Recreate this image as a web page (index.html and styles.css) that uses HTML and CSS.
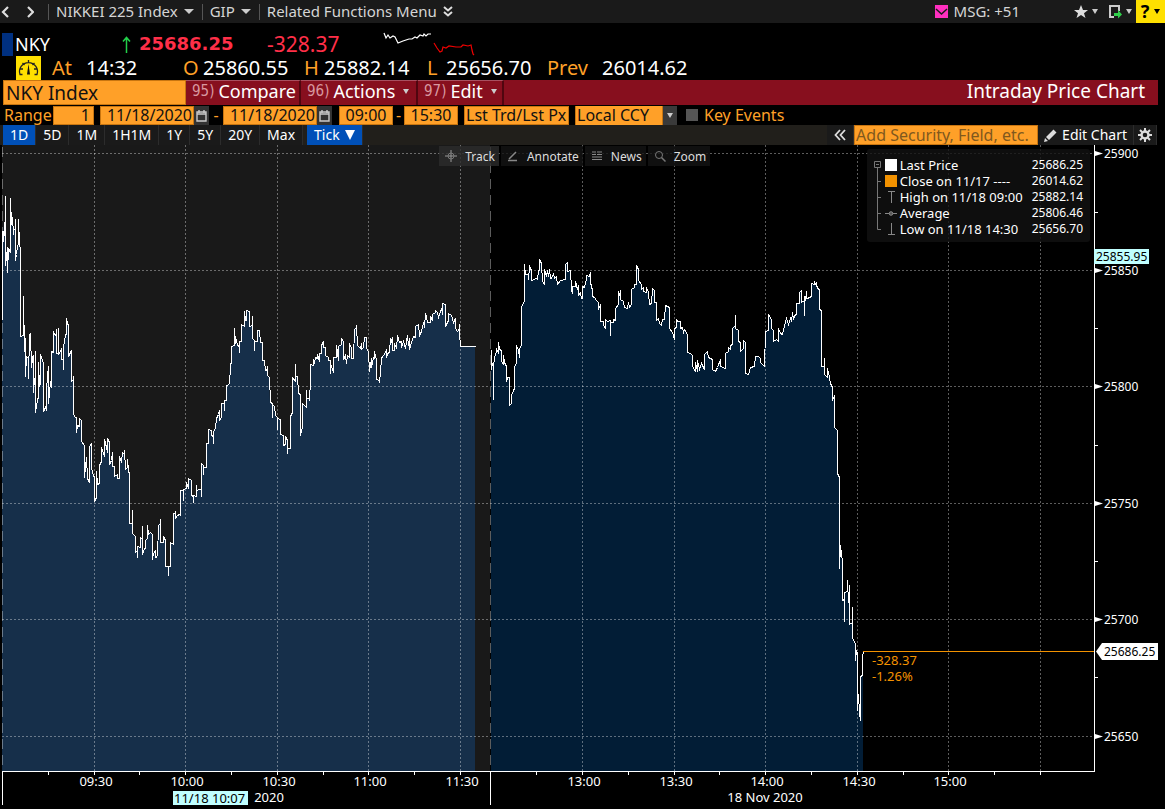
FILE: index.html
```html
<!DOCTYPE html>
<html lang="en">
<head>
    <meta charset="utf-8">
    <title>NKY Index - Intraday Price Chart</title>
    <link rel="stylesheet" href="styles.css">
</head>
<body>
    <!-- top bar -->
    <header class="topbar">
        <button class="nav" aria-label="Back"><svg width="10" height="14" viewBox="0 0 10 14"><path d="M8 2 3 7l5 5" fill="none" stroke="#ddd" stroke-width="2.2"/></svg></button>
        <button class="nav" aria-label="Forward"><svg width="10" height="14" viewBox="0 0 10 14"><path d="m4 2 5 5-5 5" fill="none" stroke="#ddd" stroke-width="2.2"/></svg></button>
        <button class="menu">NIKKEI 225 Index <i class="caret"></i></button>
        <button class="menu">GIP <i class="caret"></i></button>
        <button class="menu">Related Functions Menu
            <svg width="10" height="12" viewBox="0 0 10 12"><path d="m1 1 4 3.5L9 1M1 6l4 3.5L9 6" fill="none" stroke="#ddd" stroke-width="2"/></svg>
        </button>
        <div class="topbar-right">
            <button class="msg">
                <svg width="13" height="13" viewBox="0 0 13 13"><path fill="#ff2fc0" d="M0 0h13v13H0z"/><path d="m1 4 5.5 5L12 4" fill="none" stroke="#1a1a1a" stroke-width="1.5"/></svg>
                MSG: +51
            </button>
            <button class="tool" aria-label="Favorites">
                <svg width="14" height="14" viewBox="0 0 14 14"><path fill="#ddd" d="m7 0 2 5h5l-4 3.2L11.5 13 7 10.1 2.5 13 4 8.2 0 5h5z"/></svg>
                <i class="caret small"></i>
            </button>
            <button class="tool" aria-label="Export">
                <svg width="14" height="14" viewBox="0 0 14 14"><path d="M11 6V1H2v11h4" fill="none" stroke="#ccc" stroke-width="2"/><path fill="#2fd04a" d="M6 8h4V5l4 4.5-4 4V11H6z"/></svg>
                <i class="caret small"></i>
            </button>
            <button class="help">? <i class="caret small"></i></button>
        </div>
    </header>

    <!-- quote -->
    <section class="quote">
        <div class="quote-row first">
            <span class="flag"></span>
            <span>NKY</span>
            <svg width="9" height="17" viewBox="0 0 9 17"><path d="M4.5 17V2M1 5.5l3.5-4L8 5.5" fill="none" stroke="#22d04a" stroke-width="1.5"/></svg>
            <b class="last">25686.25</b>
            <span class="down">-328.37</span>
            <svg width="94" height="24" viewBox="382 32 94 24" fill="none" stroke-width="1.2">
                <path stroke="#fff" d="m384 33 2 5 2-3 2 3 3-2 2 1 3 6 5-2 6-2 3 0 3-2 2 1 3-3 3 1 1-2 2 2 2-2 3 0"/>
                <path stroke="#e00" d="m434 43 3 5 3 4 2-1 1-4 3 1 3-2 7 1 5 0 2-2 5 1 3-1 1 5 1 4 1 1"/>
            </svg>
        </div>
        <div class="quote-row second">
            <svg width="25" height="24" viewBox="0 0 25 24"><path fill="#ffe000" d="M0 0h25v24H0z"/><path d="M6.500 18.500H4A9 9 0 1 1 21 18.500H18.500M3.500 13H7M18 13h3.500M6.500 7l2 2M18.500 7l-2 2M12.500 4v3" fill="none" stroke="#222" stroke-width="1.3"/><path d="M12.500 8l1.500 10.500h-3z" fill="#111"/></svg>
            <span class="name">At</span><span>14:32</span>
            <span class="name">O</span><span>25860.55</span>
            <span class="name">H</span><span>25882.14</span>
            <span class="name">L</span><span>25656.70</span>
            <span class="name">Prev</span><span>26014.62</span>
        </div>
    </section>

    <!-- function bar -->
    <nav class="funcbar">
        <input class="field ticker" type="text" value="NKY Index" aria-label="Security">
        <button class="func compare"><em>95)</em> Compare</button>
        <button class="func actions"><em>96)</em> Actions <i class="caret small"></i></button>
        <button class="func edit"><em>97)</em> Edit <i class="caret small"></i></button>
        <h1>Intraday Price Chart</h1>
    </nav>

    <!-- range settings -->
    <form class="range">
        <label class="range-label" for="range">Range</label>
        <input class="field count" id="range" type="text" value="1">
        <div class="date">
            <input class="field" type="text" value="11/18/2020" aria-label="Start date">
            <button type="button" aria-label="Pick start date"><svg width="11" height="13" viewBox="0 0 11 13"><path d="M1 3h9v9H1zM1 5h9M3 1v3m5-3v3" fill="none" stroke="#ccc" stroke-width="1.4"/></svg></button>
        </div>
        <span class="dash">-</span>
        <div class="date">
            <input class="field" type="text" value="11/18/2020" aria-label="End date">
            <button type="button" aria-label="Pick end date"><svg width="11" height="13" viewBox="0 0 11 13"><path d="M1 3h9v9H1zM1 5h9M3 1v3m5-3v3" fill="none" stroke="#ccc" stroke-width="1.4"/></svg></button>
        </div>
        <input class="field time from" type="text" value="09:00" aria-label="Start time">
        <span class="dash short">-</span>
        <input class="field time" type="text" value="15:30" aria-label="End time">
        <input class="field source" type="text" value="Lst Trd/Lst Px" aria-label="Price source">
        <div class="currency">
            <select class="field" aria-label="Currency"><option>Local CCY</option></select>
        </div>
        <label class="events"><input type="checkbox">Key Events</label>
    </form>

    <!-- period tabs -->
    <div class="periods">
        <button class="tab active">1D</button>
        <button class="tab">5D</button>
        <button class="tab">1M</button>
        <button class="tab">1H1M</button>
        <button class="tab">1Y</button>
        <button class="tab">5Y</button>
        <button class="tab">20Y</button>
        <button class="tab">Max</button>
        <button class="tab active tick">Tick <i class="caret big"></i></button>
        <div class="edit-tools">
            <button class="tab" aria-label="Collapse"><svg width="12" height="12" viewBox="0 0 12 12"><path d="M6 1 1.5 6 6 11M11 1 6.5 6l4.500 5" fill="none" stroke="#ddd" stroke-width="1.8"/></svg></button>
            <input class="field add" type="text" placeholder="Add Security, Field, etc." aria-label="Add security or field">
            <button class="tab edit-chart"><svg width="13" height="13" viewBox="0 0 13 13"><path fill="#ddd" d="m0 13 1-4 3 3zM2 8l7.500-7.500 3 3L5 11z"/></svg> Edit Chart</button>
            <button class="tab gear" aria-label="Settings"><svg width="14" height="14" viewBox="0 0 14 14"><circle cx="7" cy="7" r="3.5" fill="none" stroke="#ddd" stroke-width="2.4"/><path d="M7 0v3m0 8v3M0 7h3m8 0h3M2 2l2.2 2.2m5.6 5.6L12 12M12 2 9.8 4.2M4.2 9.8 2 12" stroke="#ddd" stroke-width="2"/></svg></button>
        </div>
    </div>

    <!-- chart -->
    <main class="chart">
        <svg class="plot" viewBox="0 145 1165 664" role="img" aria-label="NKY intraday price">
            <defs>
                <path id="morning" d="M2,319 L2,231 4,231 3,241 4,222 5,222 5,195 5,265 7,247 7,272 8,248 10,252 10,198 11,224 12,217 13,234 13,230 15,228 15,218 15,260 16,254 17,245 18,244 18,219 19,244 20,249 20,336 23,335 23,296 24,351 25,341 25,337 25,376 26,356 28,358 28,378 29,335 30,333 31,367 32,356 33,368 33,354 33,392 34,378 35,378 35,350 35,412 37,399 38,397 38,362 39,386 40,383 40,354 42,360 43,363 43,411 45,407 46,410 46,390 47,375 48,366 48,403 50,381 51,387 51,351 53,352 53,331 54,334 56,335 56,328 56,353 58,353 58,327 58,354 60,351 61,348 61,359 63,359 63,369 63,347 65,335 66,333 66,318 67,323 68,325 68,356 70,352 71,350 71,381 73,379 73,375 73,414 75,417 76,417 76,432 77,425 79,426 79,418 81,420 81,441 84,445 84,477 86,457 87,478 89,482 89,446 91,443 91,468 93,475 94,477 94,501 96,497 96,471 97,484 99,483 99,465 101,461 101,447 103,453 104,456 104,439 106,447 107,452 107,438 109,442 109,464 111,460 112,452 112,466 114,466 114,476 117,474 117,478 119,478 119,456 121,462 122,452 124,454 124,450 125,469 127,467 127,459 128,470 129,474 129,523 132,523 132,509 132,533 135,536 135,552 137,550 137,557 137,546 140,547 140,537 142,539 142,525 142,554 144,548 145,548 145,540 147,538 147,525 148,534 150,532 152,534 152,559 153,553 155,550 155,557 157,556 158,525 160,523 160,518 160,542 163,542 163,536 165,540 165,566 168,566 168,575 168,566 170,566 170,542 173,544 173,513 175,513 175,510 175,518 177,515 179,514 180,515 180,490 183,490 183,500 183,489 186,488 186,482 188,488 188,478 191,480 191,495 193,496 193,502 193,495 196,496 196,484 196,491 198,489 201,489 201,496 201,463 203,465 203,474 203,467 206,467 206,443 208,443 208,429 211,430 211,435 213,436 213,443 213,431 215,428 216,418 218,414 219,410 219,420 221,417 221,403 224,403 224,410 224,400 226,400 226,385 229,384 230,365 231,361 231,346 234,345 234,328 235,343 236,340 237,345 239,346 239,352 239,341 241,341 241,324 244,326 244,311 245,320 246,320 246,310 249,311 249,326 252,325 252,315 252,338 254,340 254,350 254,341 257,341 257,330 259,330 260,342 262,342 262,360 264,360 265,370 267,369 267,365 267,375 269,377 270,402 272,403 272,417 272,404 274,406 275,415 277,417 277,429 277,418 280,419 280,434 283,435 283,445 285,444 285,436 287,440 287,453 287,448 290,448 290,416 292,412 292,377 295,381 295,363 295,376 297,376 298,393 300,394 300,435 302,426 302,403 304,405 306,407 306,389 306,398 309,398 309,400 309,390 310,389 310,364 313,365 313,359 314,363 315,357 317,358 317,354 319,361 319,353 321,353 321,345 323,341 323,347 325,347 325,355 328,357 328,360 330,360 330,373 330,363 333,372 333,357 336,357 336,345 338,360 338,346 341,344 341,338 343,341 343,359 345,355 346,363 347,355 349,357 349,343 351,348 351,358 353,358 354,329 356,327 356,325 357,345 360,348 361,343 361,349 363,347 364,337 366,337 366,347 368,352 369,371 371,358 371,367 373,357 374,358 374,351 376,360 376,379 379,380 379,382 380,372 381,358 382,356 384,354 386,349 386,357 387,353 389,352 390,338 391,341 392,337 392,350 394,350 394,343 396,348 397,335 399,342 401,341 401,347 403,341 405,348 406,341 407,335 408,345 409,338 409,349 411,342 413,336 415,337 415,326 418,324 419,335 421,331 423,322 424,327 425,313 426,316 427,322 430,322 430,316 432,320 432,314 435,312 435,310 437,312 438,317 440,311 442,307 442,314 442,303 445,304 445,326 448,320 448,313 451,315 453,322 455,318 455,328 457,331 459,328 459,323 459,336 460,343 460,346 475,346"/>
                <path id="afternoon" d="M491,349 L491,369 492,363 493,363 493,399 493,365 495,353 496,352 496,348 498,353 498,342 499,349 501,350 501,361 503,364 503,355 504,362 506,366 506,381 507,377 509,377 509,405 511,403 511,395 513,390 514,388 514,366 516,363 516,345 518,350 519,357 519,349 521,344 521,306 524,301 524,264 525,274 528,274 528,279 529,266 531,270 531,280 536,278 537,279 538,271 539,269 539,259 541,263 542,281 544,284 544,269 546,276 547,270 548,276 549,269 550,278 552,277 553,273 554,278 556,276 557,284 560,280 565,279 565,264 567,262 567,271 570,270 571,289 572,293 572,286 575,286 575,281 577,289 578,285 578,295 580,292 581,298 582,298 582,286 584,287 586,279 586,275 589,276 590,272 590,282 592,290 592,296 594,297 596,300 598,302 598,309 600,304 600,321 603,321 603,325 605,328 605,319 607,321 610,320 610,335 610,322 613,322 613,319 615,320 615,308 618,304 618,291 620,297 620,289 620,299 623,301 624,307 627,308 628,302 629,307 631,304 631,289 634,287 634,284 636,284 636,265 638,269 638,280 641,284 641,289 643,287 643,291 646,292 646,287 648,292 649,304 651,303 652,288 654,290 654,302 656,302 656,320 658,318 659,323 661,325 662,319 664,319 665,305 669,307 669,328 672,332 674,339 674,328 676,327 676,319 677,321 680,321 680,328 682,327 683,332 684,329 687,334 687,352 690,353 692,355 692,366 695,371 695,362 697,371 697,360 699,369 701,363 704,369 704,354 707,351 708,357 712,359 712,369 715,371 717,367 720,359 720,366 725,368 725,353 728,351 728,347 730,349 730,345 732,344 732,328 735,325 735,314 735,328 738,330 738,341 740,342 740,351 743,348 743,340 745,342 745,373 748,374 750,367 754,366 755,356 758,356 760,358 760,362 764,366 765,331 768,330 768,314 771,319 771,328 773,330 773,341 776,339 778,341 778,328 780,333 782,334 784,325 786,318 788,324 790,318 791,321 792,312 793,319 794,315 796,314 796,303 799,303 799,292 801,290 801,302 804,300 804,315 804,296 805,300 806,291 806,298 810,297 811,295 811,283 814,284 814,281 816,286 816,282 817,288 819,289 819,309 821,310 821,366 824,366 824,357 824,374 827,377 827,368 829,377 830,383 832,387 832,400 834,395 834,427 837,430 837,473 839,477 839,568 840,545 841,553 842,561 842,600 844,599 844,621 844,592 847,591 847,580 848,602 849,585 849,624 852,622 852,606 852,638 855,643 855,660 856,650 857,654 857,710 858,694 859,713 860,720 860,676 862,675 862,657 863,651"/>
            </defs>
            <rect class="session" x="2" y="145" width="488" height="626"/>
            <g class="areas"></g>
            <g class="grid">
                <path d="M2 153.5H1094M2 270.5H1094M2 386.5H1094M2 503.5H1094M2 619.5H1094M2 736.5H1094"/>
                <path d="M94.5 145V771M185.5 145V771M277.5 145V771M368.5 145V771M460.5 145V771M582.5 145V771M674.5 145V771M765.5 145V771M857.5 145V771M948.5 145V771M1040.5 145V771"/>
                <path class="break" d="M2.5 147V771M490.5 147V771"/>
            </g>
            <use class="line" href="#morning" transform="translate(.5 .5)"/>
            <use class="line" href="#afternoon" transform="translate(.5 .5)"/>
            <path class="last-line" d="M863 651.5H1094"/>
            <g class="axis">
                <path d="M2 771.5H1095M1094.5 145V771M2.5 771V805M490.5 771V805"/>
                <path d="M48.5 771v4M94.5 771v4M139.5 771v4M185.5 771v4M231.5 771v4M277.5 771v4M323.5 771v4M368.5 771v4M414.5 771v4M460.5 771v4M536.5 771v4M582.5 771v4M628.5 771v4M674.5 771v4M719.5 771v4M765.5 771v4M811.5 771v4M857.5 771v4M903.5 771v4M948.5 771v4M994.5 771v4M1040.5 771v4"/>
                <path d="M1095 212.5h3M1095 328.5h3M1095 445.5h3M1095 561.5h3M1095 677.5h3"/>
            </g>
            <path fill="#fff" d="M1095 151v5l8-2.5zM1095 268v5l8-2.5zM1095 384v5l8-2.5zM1095 501v5l8-2.5zM1095 617v5l8-2.5zM1095 734v5l8-2.5z"/>
            <g class="price">
                <text x="1104" y="158">25900</text>
                <text x="1104" y="275">25850</text>
                <text x="1104" y="391">25800</text>
                <text x="1104" y="508">25750</text>
                <text x="1104" y="624">25700</text>
                <text x="1104" y="741">25650</text>
            </g>
            <g class="hour">
                <text x="96" y="786">09:30</text>
                <text x="187" y="786">10:00</text>
                <text x="279" y="786">10:30</text>
                <text x="370" y="786">11:00</text>
                <text x="462" y="786">11:30</text>
                <text x="584" y="786">13:00</text>
                <text x="676" y="786">13:30</text>
                <text x="767" y="786">14:00</text>
                <text x="859" y="786">14:30</text>
                <text x="950" y="786">15:00</text>
                <text x="765" y="802">18 Nov 2020</text>
                <text x="269" y="802">2020</text>
            </g>
            <g class="price">
                <rect x="1094" y="249" width="55" height="15" fill="#c0ffff"/>
                <text class="dark" x="1096" y="261">25855.95</text>
                <rect x="173" y="791" width="75" height="14" fill="#c0ffff"/>
                <text class="dark cursor" x="174" y="803">11/18 10:07</text>
                <path fill="#fff" d="M1096 651.5l6-8.5h56v17h-56z"/>
                <text class="dark" x="1104" y="656">25686.25</text>
                <text class="change" x="872" y="665">-328.37</text>
                <text class="change" x="872" y="681">-1.26%</text>
            </g>
        </svg>

        <div class="chart-tools">
            <button class="on"><svg width="12" height="12" viewBox="0 0 12 12"><path d="M6 0v12M0 6h12" stroke="#999"/><circle cx="6" cy="6" r="3" fill="none" stroke="#777"/></svg>Track</button>
            <button><svg width="12" height="12" viewBox="0 0 12 12"><path d="M2 9 9 2M1 10.5h9" stroke="#888" stroke-width="1.5"/></svg>Annotate</button>
            <button><svg width="12" height="12" viewBox="0 0 12 12"><path d="M1 2h4m1 0h5M1 4.500h4m1 0h5M1 7h10M1 9.500h10" stroke="#888" stroke-width="1.2"/></svg>News</button>
            <button><svg width="12" height="12" viewBox="0 0 12 12"><circle cx="5" cy="5" r="3.5" fill="none" stroke="#777"/><path d="m7.5 7.5 4 4" stroke="#777" stroke-width="1.5"/></svg>Zoom</button>
        </div>

        <div class="legend">
            <svg class="tree" width="8" height="72" viewBox="0 0 8 72"><path d="M.5.5h6v6h-6zM2 3.5h3M3.5 7v61.5H7M4 20.5h3M4 36.5h3M4 52.5h3" fill="none" stroke="#777"/></svg>
            <table>
                <tr><td class="key"><i class="swatch"></i></td><th>Last Price</th><td>25686.25</td></tr>
                <tr><td class="key"><i class="swatch orange"></i></td><th>Close on 11/17 ----</th><td>26014.62</td></tr>
                <tr><td class="key"><svg width="12" height="12" viewBox="0 0 12 12"><path d="M3 .5h7M6.5 0v12" stroke="#888"/></svg></td><th>High on 11/18 09:00</th><td>25882.14</td></tr>
                <tr><td class="key"><svg width="12" height="12" viewBox="0 0 12 12"><path d="M0 6.5h12" stroke="#888"/><circle cx="6" cy="6.5" r="1.8" fill="#555" stroke="#888"/></svg></td><th>Average</th><td>25806.46</td></tr>
                <tr><td class="key"><svg width="12" height="12" viewBox="0 0 12 12"><path d="M3 11.5h7M6.5 0v12" stroke="#888"/></svg></td><th>Low on 11/18 14:30</th><td>25656.70</td></tr>
            </table>
        </div>
    </main>

    <script src="chart.js"></script>
</body>
</html>
```
FILE: styles.css
```css
:root {
    --orange: #ffa028;
    --red: #870f1e;
    --bar: #1a1a1a;
    --blue: #0050b8;
}
* {
    box-sizing: border-box;
}
body {
    margin: 0;
    background: #000;
    color: #fff;
    font-family: "Noto Sans", sans-serif;
    overflow-x: hidden;
}
button, input, select {
    font-family: inherit;
    color: inherit;
    border: none;
    border-radius: 0;
    margin: 0;
    padding: 0;
    background: none;
    white-space: nowrap;
}
button {
    cursor: pointer;
}
svg {
    flex: none;
}
.caret {
    flex: none;
    border: 5px solid transparent;
    border-top-color: #ccc;
    border-bottom: none;
}
.caret.small {
    border-width: 5px 3px 0;
}
.caret.big {
    border-width: 10px 5px 0;
    border-top-color: #fff;
}

/* top bar */
.topbar {
    display: flex;
    align-items: center;
    height: 23px;
    background: var(--bar);
    color: #d5d5d5;
}
.topbar button {
    display: flex;
    align-items: center;
    height: 23px;
    font-size: 15px;
    line-height: 23px;
}
.nav {
    width: 24px;
}
.menu {
    gap: 6px;
    padding: 0 8px;
    background: linear-gradient(#555, #555) left center / 1px 16px no-repeat;
}
.topbar-right {
    display: flex;
    margin-left: auto;
}
.msg {
    gap: 6px;
    margin-right: 54px;
}
.tool {
    width: 34px;
    gap: 4px;
}
.tool + .tool {
    width: 28px;
}
.topbar .help {
    justify-content: center;
    gap: 5px;
    width: 29px;
    background: #ffe000;
    color: #000;
    font-size: 18px;
    font-weight: bold;
}
.help .caret {
    border-top-color: #000;
}

/* quote */
.quote {
    height: 57px;
    padding-top: 9px;
    line-height: 24px;
}
.quote-row {
    display: grid;
    align-items: center;
    justify-content: start;
    height: 24px;
    font-size: 20px;
    white-space: nowrap;
}
.first {
    grid-template-columns: 13px 107px 17px 128px 115px auto;
    padding-left: 2px;
    font-size: 18px;
}
.second {
    grid-template-columns: 36px 34px 97px 20px 101px 20px 103px 19px 101px 55px auto;
    padding-left: 16px;
}
.name {
    color: var(--orange);
}
.flag {
    width: 11px;
    height: 23px;
    background: #003080;
}
.last {
    color: #ff2f48;
    font-family: "DejaVu Sans", sans-serif;
    font-size: 18px;
}
.down {
    color: #ff2f48;
    font-size: 21px;
}

/* function bar */
.field {
    background: var(--orange);
    color: #111;
    border: 1px solid #c87510;
    outline: none;
}
.funcbar {
    display: flex;
    height: 25px;
    margin: 0 7px 0 3px;
    background: var(--red);
}
.ticker {
    width: 183px;
    padding: 0 2px;
    font-size: 19px;
}
.func {
    display: flex;
    align-items: center;
    gap: 4px;
    padding: 0 6px 4px;
    border-top: 1px solid #a85060;
    border-right: 2px solid #50060f;
    font-size: 18px;
    line-height: 20px;
}
.func em {
    color: #d898a0;
    font-family: "DejaVu Sans Condensed", sans-serif;
    font-size: 15px;
    font-style: normal;
}
.func .caret {
    margin-left: 4px;
}
.compare {
    width: 115px;
}
.actions {
    width: 117px;
}
.edit {
    width: 86px;
}
.funcbar h1 {
    margin: 0 13px 0 auto;
    font-size: 19px;
    font-weight: normal;
    line-height: 23px;
    white-space: nowrap;
}

/* range settings */
.range {
    display: flex;
    align-items: center;
    height: 20px;
    padding-left: 4px;
    color: var(--orange);
    font-size: 16px;
    line-height: 18px;
    white-space: nowrap;
}
.range .field {
    height: 19px;
    padding: 0 3px;
    font-size: 16px;
}
.range-label {
    width: 49px;
}
.range .count {
    width: 41px;
    margin-right: 6px;
    text-align: right;
}
.date {
    display: flex;
}
.date .field {
    width: 94px;
    padding: 0 1px;
    text-align: right;
}
.date button {
    display: flex;
    align-items: center;
    justify-content: center;
    width: 15px;
    background: #333;
}
.dash {
    width: 14px;
    text-align: center;
}
.dash.short {
    width: 11px;
}
.time {
    width: 54px;
    text-align: center;
}
.time.from {
    margin-left: 7px;
}
.range .source {
    width: 105px;
    margin: 0 6px;
    padding: 0 1px;
}
.currency {
    position: relative;
    width: 102px;
    height: 19px;
    background: #3a3a3a;
}
.currency select {
    display: block;
    width: 88px;
    appearance: none;
    line-height: 16px;
}
.range .currency .field {
    padding: 0 1px;
    border-width: 0 1px;
}
.currency::after {
    content: "";
    position: absolute;
    right: 4px;
    top: 7px;
    border: 3px solid transparent;
    border-top: 5px solid #ccc;
    border-bottom: none;
    pointer-events: none;
}
.events {
    display: flex;
    align-items: center;
    gap: 6px;
    margin-left: 9px;
}
.events input {
    appearance: none;
    width: 12px;
    height: 12px;
    background: #555;
}

/* period tabs */
.periods {
    display: flex;
    height: 20px;
    margin-right: 8px;
    padding-left: 3px;
    background: #211f1b;
}
.tab {
    display: flex;
    align-items: center;
    justify-content: center;
    gap: 5px;
    padding: 0 7px;
    background: var(--bar);
    border-right: 1px solid #2c2c2c;
    font-size: 14px;
    line-height: 20px;
}
.tab.active {
    background: var(--blue);
}
.tab.tick {
    margin-left: 4px;
}
.edit-tools {
    display: flex;
    margin-left: auto;
}
.add {
    width: 184px;
    padding: 0 1px;
    font-size: 16px;
}
.add::placeholder {
    color: #80581e;
    opacity: 1;
}
.tab.edit-chart {
    padding: 0 6px;
}
.tab.gear {
    padding: 0 4px;
}

/* chart */
.chart {
    position: relative;
}
.plot {
    display: block;
    width: 100%;
}
.session {
    fill: #191919;
}
.fill-am {
    fill: #162f4a;
}
.fill-pm {
    fill: #021d36;
}
.grid path {
    fill: none;
    stroke: rgba(255, 255, 255, 0.36);
    stroke-dasharray: 2 2;
}
.grid .break {
    stroke-dasharray: 10 6;
}
.line {
    fill: none;
    stroke: #fff;
    shape-rendering: crispEdges;
}
.last-line {
    stroke: #f39200;
}
.axis path {
    fill: none;
    stroke: #fff;
}
.price text {
    fill: #fff;
    font-size: 12px;
}
.hour text {
    fill: #fff;
    font-size: 13px;
    text-anchor: middle;
}
.price .dark {
    fill: #000;
}
.price .cursor {
    font-size: 13px;
}
.price .change {
    fill: #f39200;
    font-size: 13px;
}
.chart-tools {
    position: absolute;
    top: 1px;
    left: 37.7%;
    display: flex;
    gap: 2px;
}
.chart-tools button {
    display: flex;
    align-items: center;
    gap: 8px;
    height: 20px;
    padding: 0 4px 0 6px;
    background: rgba(20, 20, 20, 0.8);
    color: #ddd;
    font-size: 12px;
}
.chart-tools .on {
    background: rgba(44, 44, 44, 0.8);
}
.legend {
    position: absolute;
    top: 4px;
    right: 75px;
    display: flex;
    align-items: flex-start;
    gap: 3px;
    padding: 8px 7px 5px 7px;
    border-radius: 3px;
    background: rgba(17, 17, 17, 0.8);
}
.tree {
    margin-top: 4px;
}
.legend table {
    border-collapse: collapse;
    font-size: 12px;
    line-height: 16px;
    white-space: nowrap;
}
.legend tr {
    height: 16px;
}
.legend td, .legend th {
    padding: 0;
    font-weight: normal;
    text-align: left;
}
.legend th {
    width: 132px;
    font-size: 13px;
}
.legend .key {
    width: 15px;
}
.key svg, .swatch {
    display: block;
    width: 12px;
    height: 12px;
}
.swatch {
    background: #fff;
}
.swatch.orange {
    background: #f39200;
}
```
FILE: chart.js
```javascript
// close each price line down to the time axis to get its area
const NS = 'http://www.w3.org/2000/svg';
const BASE = 771;
const areas = document.querySelector('.areas');

function addArea(id, cls, left, right) {
    const path = document.createElementNS(NS, 'path');
    const line = document.getElementById(id).getAttribute('d');
    path.setAttribute('d', `${line} L${right},${BASE} ${left},${BASE} Z`);
    path.setAttribute('class', cls);
    areas.appendChild(path);
}

addArea('morning', 'fill-am', 2, 475);
addArea('afternoon', 'fill-pm', 491, 863);
```
